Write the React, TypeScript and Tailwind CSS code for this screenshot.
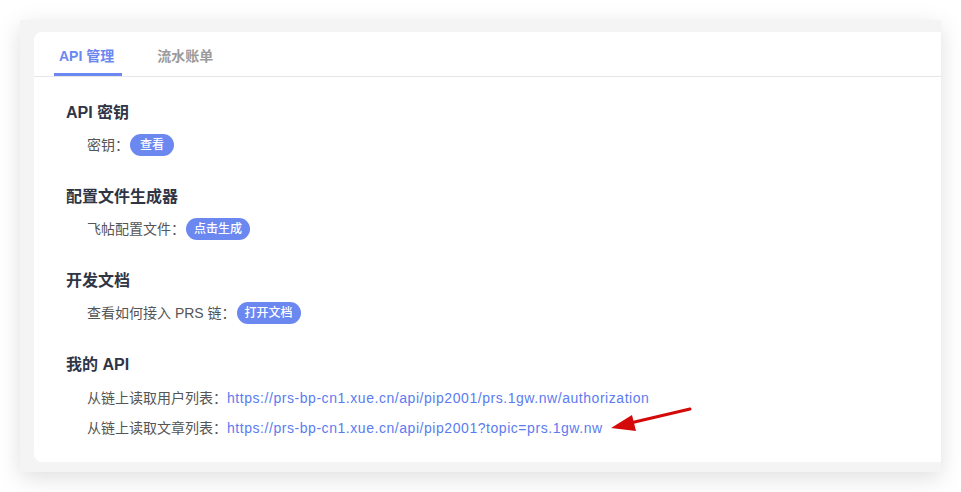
import React from "react";

const font = { fontFamily: '"Liberation Sans", "Noto Sans CJK SC", sans-serif' };

function Pill({ children }: { children: React.ReactNode }) {
  return (
    <span className="inline-flex h-[22px] items-center rounded-full bg-[#6b87f0] px-2 text-[12px] font-medium leading-none text-white">
      {children}
    </span>
  );
}

function Section({ title, children }: { title: string; children: React.ReactNode }) {
  return (
    <div className="flex flex-col">
      <h2 className="h-6 text-[16px] font-bold leading-6 text-[#2f3545]">{title}</h2>
      <div className="pl-[21px]">{children}</div>
    </div>
  );
}

export default function App() {
  return (
    <div className="h-[492px] w-[961px] bg-white p-5" style={font}>
      <div className="flex h-[452px] w-[921px] flex-col bg-[#f4f4f4] pb-[10px] pl-[14px] pt-3 shadow-[0_6px_22px_rgba(0,0,0,0.13)]">
        <div className="relative flex flex-1 flex-col rounded-l-lg bg-white">
          <div className="flex h-[45px] items-end gap-[30px] border-b border-[#e6e6e6] pl-5">
            <div className="flex h-full flex-col justify-end">
              <span className="pb-[7px] pl-[5px] pr-[8px] text-[14px] font-bold leading-5 text-[#6b87f0]">API 管理</span>
              <div className="h-[3px] bg-[#6b87f0]" />
            </div>
            <div className="flex h-full flex-col justify-end">
              <span className="px-[5px] pb-[10px] text-[14px] font-bold leading-5 text-[#9b9b9b]">流水账单</span>
            </div>
          </div>

          <div className="flex flex-col gap-[29px] pl-8 pt-6 text-[14px] text-[#555]">
            <Section title="API 密钥">
              <div className="mt-[9px] flex h-[22px] items-center">
                <span>密钥：</span>
                <span className="ml-[1px]"><span className="inline-flex h-[22px] items-center rounded-full bg-[#6b87f0] px-[10px] text-[12px] font-medium leading-none text-white">查看</span></span>
              </div>
            </Section>
            <Section title="配置文件生成器">
              <div className="mt-[9px] flex h-[22px] items-center">
                <span>飞帖配置文件：</span>
                <span className="ml-[1px]"><Pill>点击生成</Pill></span>
              </div>
            </Section>
            <Section title="开发文档">
              <div className="mt-[9px] flex h-[22px] items-center">
                <span>查看如何接入 PRS 链：</span>
                <span className="ml-[1px]"><Pill>打开文档</Pill></span>
              </div>
            </Section>
            <Section title="我的 API">
              <div className="mt-[10px] flex flex-col gap-2">
                <div className="flex h-[22px] items-center">
                  <span>从链上读取用户列表：</span>
                  <span className="tracking-[0.55px] text-[#5b7cf0]">https://prs-bp-cn1.xue.cn/api/pip2001/prs.1gw.nw/authorization</span>
                </div>
                <div className="flex h-[22px] items-center">
                  <span>从链上读取文章列表：</span>
                  <span className="tracking-[0.55px] text-[#5b7cf0]">https://prs-bp-cn1.xue.cn/api/pip2001?topic=prs.1gw.nw</span>
                </div>
              </div>
            </Section>
          </div>

          <svg
            className="pointer-events-none absolute left-0 top-0"
            width="907"
            height="430"
            viewBox="0 0 907 430"
          >
            <line x1="656" y1="377" x2="592" y2="392" stroke="#d40a0a" strokeWidth="3" strokeLinecap="round" />
            <polygon points="577,396 598,383 602,399" fill="#d40a0a" />
          </svg>
        </div>
      </div>
    </div>
  );
}
